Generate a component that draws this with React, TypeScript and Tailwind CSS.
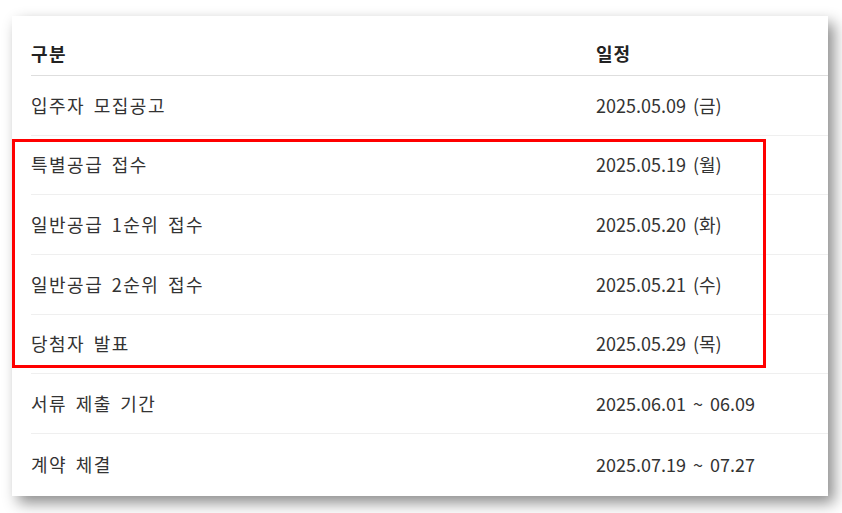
const rows = [
  { label: '입주자 모집공고', date: '2025.05.09 (금)' },
  { label: '특별공급 접수', date: '2025.05.19 (월)' },
  { label: '일반공급 1순위 접수', date: '2025.05.20 (화)' },
  { label: '일반공급 2순위 접수', date: '2025.05.21 (수)' },
  { label: '당첨자 발표', date: '2025.05.29 (목)' },
  { label: '서류 제출 기간', date: '2025.06.01 ~ 06.09' },
  { label: '계약 체결', date: '2025.07.19 ~ 07.27' },
];

const App = () => {
  return (
    <div
      className="relative h-[513px] w-[842px] overflow-hidden bg-white pl-[12px] pt-[16px]"
      style={{ fontFamily: '"Noto Sans CJK KR", "Noto Sans", sans-serif' }}
    >
      <div className="flex h-[480px] w-[816px] flex-col bg-white pl-[19px] shadow-[6px_7px_14px_rgba(0,0,0,0.45)] [word-spacing:3px]">
        <div className="flex border-b border-[#dedede] pb-[8px] pt-[24px] text-[18px] font-bold leading-[27px] text-[#222]">
          <div className="w-[565px] tracking-[1.5px]">구분</div>
          <div className="tracking-[1px]">일정</div>
        </div>
        {rows.map((row, i) => (
          <div
            key={row.label}
            className={`flex items-center text-[18px] text-[#333] ${i === rows.length - 1 ? 'flex-1' : 'h-[59.67px] border-b border-[#efefef]'}`}
          >
            <div className="w-[565px] tracking-[1.5px]">{row.label}</div>
            <div>{row.date}</div>
          </div>
        ))}
      </div>
      <div className="absolute left-[12px] top-[139px] h-[229px] w-[754px] border-[3px] border-[#ff0000]" />
    </div>
  );
};

export default App;
